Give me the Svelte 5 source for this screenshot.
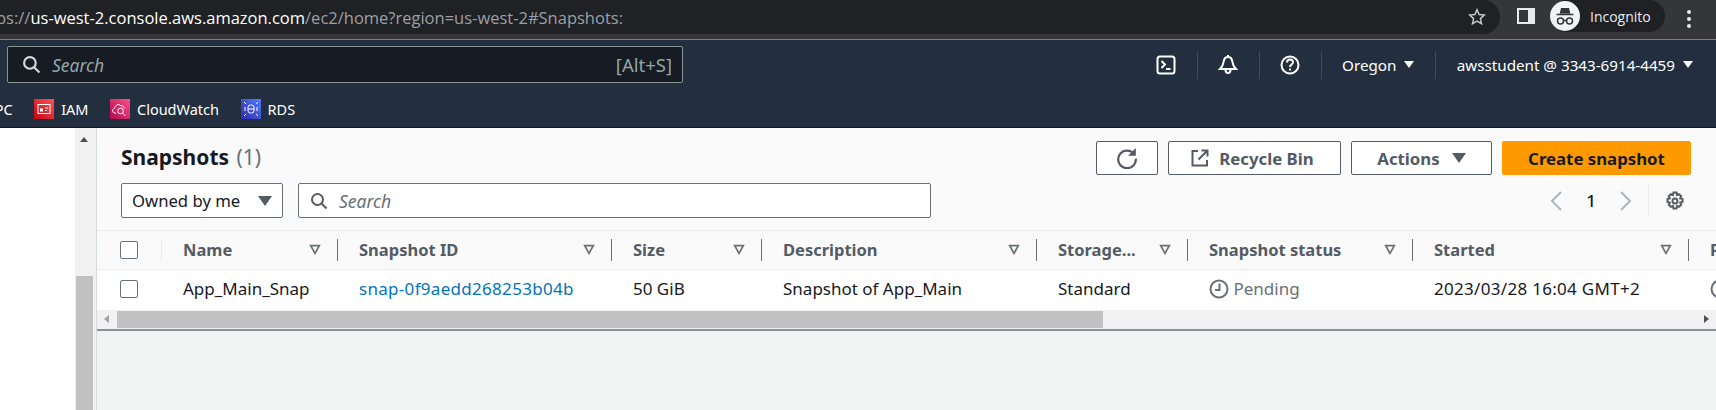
<script lang="ts">
  const columns = [
    { label: "Name", width: 176 },
    { label: "Snapshot ID", width: 274 },
    { label: "Size", width: 150 },
    { label: "Description", width: 275 },
    { label: "Storage...", width: 151 },
    { label: "Snapshot status", width: 225 },
    { label: "Started", width: 276 },
    { label: "P", width: 120 }
  ];
</script>

<div class="page">
  <header class="chrome">
    <div class="omnibox">
      <div class="url"><span class="clip">ps://</span><b>us-west-2.console.aws.amazon.com</b>/ec2/home?region=us-west-2#Snapshots:</div>
      <svg class="star" width="18" height="18" viewBox="0 0 18 18" fill="none" stroke="#c4c7c5" stroke-width="1.5"><path d="M9 1.8l2.1 4.8 5.2.5-3.9 3.5 1.1 5.1L9 13l-4.5 2.7 1.1-5.1-3.9-3.5 5.2-.5z" /></svg>
    </div>
    <svg class="side" width="18" height="16" viewBox="0 0 18 16"><path fill="#e8eaed" d="M0 0h18v16H0z" /><path fill="#35363a" d="M2 2h9v12H2z" /></svg>
    <div class="incognito">
      <span class="avatar">
        <svg width="30" height="30" viewBox="0 0 30 30"><circle cx="15" cy="15" r="15" fill="#f1f3f4" /><path fill="#35363a" d="M11 7h8l1.300 5.500H9.700z M6.500 12.800h17v1.500h-17z" /><g fill="none" stroke="#35363a" stroke-width="1.500"><circle cx="10.500" cy="20" r="3" /><circle cx="19.500" cy="20" r="3" /><path d="M13.500 19.500h3" /></g></svg>
      </span>
      <span>Incognito</span>
    </div>
    <div class="dots"><i></i><i></i><i></i></div>
  </header>

  <nav class="aws">
    <div class="nav-top">
      <div class="global-search">
        <svg width="19" height="19" viewBox="0 0 18 18" fill="none" stroke="#d5dbdb" stroke-width="2"><circle cx="7.500" cy="7.500" r="5.500" /><path d="M11.500 11.500l5 5" /></svg>
        <em>Search</em>
        <span class="shortcut">[Alt+S]</span>
      </div>
      <div class="nav-actions">
        <span class="nav-item icon">
          <svg width="20" height="20" viewBox="0 0 20 20" fill="none" stroke="#fff" stroke-width="2"><rect x="1.500" y="1.500" width="17" height="17" rx="2.500" /><path d="M5.500 6l3.500 3.500L5.500 13M10 14h4.500" /></svg>
        </span>
        <span class="nav-item icon">
          <svg width="20" height="22" viewBox="0 0 20 22" fill="none" stroke="#fff" stroke-width="2"><path d="M10 1v2M10 3c-2.500 0-4 2-4.300 4.500-.3 3-1.700 5.500-3.700 7.500h16c-2-2-3.400-4.500-3.700-7.500C14 5 12.500 3 10 3zM7.500 15.500c0 2 1 3.500 2.500 3.500s2.500-1.500 2.500-3.500" /></svg>
        </span>
        <span class="nav-item icon">
          <svg width="20" height="20" viewBox="0 0 20 20" fill="none" stroke="#fff" stroke-width="2"><circle cx="10" cy="10" r="8.500" /><path d="M7 7.500c0-1.800 1.300-3 3-3s3 1.200 3 2.800c0 2.200-3 2.400-3 4.700M10 13.500v2" /></svg>
        </span>
        <span class="nav-item region">Oregon <span class="caret"></span></span>
        <span class="nav-item user">awsstudent @ 3343-6914-4459 <span class="caret"></span></span>
      </div>
    </div>
    <div class="favorites">
      <span class="fav cut">VPC</span>
      <span class="fav">
        <svg class="fav-icon" width="20" height="20" viewBox="0 0 20 20">
          <defs><linearGradient id="iam-bg" x1="0" y1="1" x2="1" y2="0"><stop offset="0" stop-color="#bd0816" /><stop offset="1" stop-color="#ff5252" /></linearGradient></defs>
          <rect width="20" height="20" fill="url(#iam-bg)" />
          <rect x="4" y="5.500" width="12" height="9" fill="none" stroke="#fff" />
          <path fill="#fff" d="M6 9.500h3v3H6zM11 8.500h3v1h-3zM11 11h2v1h-2z" />
        </svg>
        IAM
      </span>
      <span class="fav">
        <svg class="fav-icon" width="20" height="20" viewBox="0 0 20 20">
          <defs><linearGradient id="cw-bg" x1="0" y1="1" x2="1" y2="0"><stop offset="0" stop-color="#b0084d" /><stop offset="1" stop-color="#ff4f8b" /></linearGradient></defs>
          <rect width="20" height="20" fill="url(#cw-bg)" />
          <g fill="none" stroke="#fff"><path d="M6 14H5c-3 0-3-4-.5-4.500C5 6 9 4 11 7c2-.5 3.500 1 3.200 2.500" /><circle cx="10.500" cy="12" r="2.800" /><path d="M12.500 14l3 3" /></g>
        </svg>
        CloudWatch
      </span>
      <span class="fav">
        <svg class="fav-icon" width="20" height="20" viewBox="0 0 20 20">
          <defs><linearGradient id="rds-bg" x1="0" y1="1" x2="1" y2="0"><stop offset="0" stop-color="#2e27ad" /><stop offset="1" stop-color="#527fff" /></linearGradient></defs>
          <rect width="20" height="20" fill="url(#rds-bg)" />
          <g fill="none" stroke="#fff"><rect x="7" y="6" width="6" height="8" rx="2.500" /><path d="M7 10h6M3 3l2 2M17 3l-2 2M3 17l2-2M17 17l-2-2M4 8v4M16 8v4" /></g>
        </svg>
        RDS
      </span>
    </div>
  </nav>

  <main class="body">
    <div class="side-nav"></div>
    <div class="v-scroll">
      <span class="up"></span>
      <div class="v-thumb"></div>
    </div>
    <section class="content">
      <div class="panel-head">
        <div class="head-row">
          <h1>Snapshots <span>(1)</span></h1>
          <div class="buttons">
            <button class="btn refresh" aria-label="Refresh">
              <svg width="22" height="22" viewBox="0 0 20 20" fill="none" stroke="#545b64" stroke-width="2"><path d="M16.500 6.500A8 8 0 1 0 18 10.500" /><path fill="#545b64" stroke="none" d="M18 1v7h-7z" /></svg>
            </button>
            <button class="btn recycle">
              <svg width="18" height="18" viewBox="0 0 18 18" fill="none" stroke="#545b64" stroke-width="2"><path d="M7 2H1.500v14.500H16V11M10.500 1.500h6v6M16 2L7.500 10.500" /></svg>
              Recycle Bin
            </button>
            <button class="btn actions">Actions <span class="caret dark"></span></button>
            <button class="btn primary">Create snapshot</button>
          </div>
        </div>
        <div class="filter-row">
          <div class="select">Owned by me <span class="caret dark"></span></div>
          <div class="search">
            <svg width="18" height="18" viewBox="0 0 18 18" fill="none" stroke="#545b64" stroke-width="2"><circle cx="7.500" cy="7.500" r="5.500" /><path d="M11.500 11.500l5 5" /></svg>
            <em>Search</em>
          </div>
          <div class="pager">
            <svg width="14" height="22" viewBox="0 0 14 22" fill="none" stroke="#aab7b8" stroke-width="2"><path d="M12 2L3 11l9 9" /></svg>
            <span class="page-no">1</span>
            <svg width="14" height="22" viewBox="0 0 14 22" fill="none" stroke="#aab7b8" stroke-width="2"><path d="M2 2l9 9-9 9" /></svg>
            <span class="pager-line"></span>
            <svg width="20" height="20" viewBox="0 0 20 20" fill="none" stroke="#545b64" stroke-width="2"><path d="M8.500 1.500h3l.5 2.500 2-.9 2.200 2.100-1 2.100 2.300.7v3l-2.300.7 1 2.100-2.200 2.100-2-.9-.5 2.500h-3l-.5-2.500-2 .9-2.200-2.100 1-2.100-2.300-.7v-3l2.300-.7-1-2.100 2.200-2.100 2 .9z" /><circle cx="10" cy="10" r="2.500" /></svg>
          </div>
        </div>
      </div>

      <div class="table-wrap">
        <table>
          <colgroup>
            <col style="width: 65px" />
            {#each columns as col}
              <col style="width: {col.width}px" />
            {/each}
          </colgroup>
          <thead>
            <tr>
              <th class="check-cell"><span class="check"></span><span class="soft-line"></span></th>
              {#each columns as col, i}
                <th>
                  <div class="th-inner">
                    <span>{col.label}</span>
                    {#if i < columns.length - 1}
                      <svg width="12" height="11" viewBox="0 0 14 12" fill="none" stroke="#687078" stroke-width="2"><path d="M2 1.500h10L7 10.500z" /></svg>
                      <span class="col-line"></span>
                    {/if}
                  </div>
                </th>
              {/each}
            </tr>
          </thead>
          <tbody>
            <tr>
              <td class="check-cell"><span class="check"></span></td>
              <td>App_Main_Snap</td>
              <td class="digits"><a href="#top">snap-0f9aedd268253b04b</a></td>
              <td>50 GiB</td>
              <td>Snapshot of App_Main</td>
              <td>Standard</td>
              <td class="pending">
                <svg width="20" height="20" viewBox="0 0 20 20" fill="none" stroke="#687078" stroke-width="2"><circle cx="10" cy="10" r="8.500" /><path d="M10.500 4.500V11H6" /></svg>
                Pending
              </td>
              <td class="digits">2023/03/28 16:04 GMT+2</td>
              <td class="pending">
                <svg width="20" height="20" viewBox="0 0 20 20" fill="none" stroke="#687078" stroke-width="2"><circle cx="10" cy="10" r="8.500" /></svg>
              </td>
            </tr>
          </tbody>
        </table>
      </div>

      <div class="h-scroll">
        <span class="left"></span>
        <div class="h-thumb"></div>
        <span class="right"></span>
      </div>
    </section>
  </main>
</div>

<style>
  :global(body) {
    margin: 0;
    background: #f2f3f3;
  }

  .page {
    width: 1716px;
    height: 410px;
    overflow: hidden;
    display: flex;
    flex-direction: column;
    font-family: "Noto Sans", "Open Sans", sans-serif;
    font-size: 17px;
    color: #16191f;
  }

  /* browser toolbar */
  .chrome {
    flex: 0 0 39px;
    background: #35363a;
    border-bottom: 1px solid #7b7f84;
    display: flex;
    align-items: flex-start;
    font-family: "Open Sans", sans-serif;
    color: #e8eaed;
  }

  .omnibox {
    width: 1500px;
    height: 34px;
    margin-right: 1px;
    background: #202124;
    border-radius: 0 17px 17px 0;
    display: flex;
    align-items: center;
    justify-content: space-between;
    padding-right: 14px;
    box-sizing: border-box;
    flex: none;
  }

  .url {
    font-size: 16.500px;
    color: #9aa0a6;
    white-space: nowrap;
    margin-left: -4px;
  }

  .url b {
    font-weight: 400;
    color: #fff;
  }

  .side {
    margin: 8px 0 0 16px;
    flex: none;
  }

  .incognito {
    margin-left: 15px;
    width: 115px;
    height: 32px;
    box-sizing: border-box;
    border-radius: 16px;
    background: #202124;
    display: flex;
    align-items: center;
    gap: 10px;
    font-size: 14px;
    flex: none;
  }

  .avatar {
    display: flex;
  }

  .dots {
    margin: 10px 0 0 22px;
    display: flex;
    flex-direction: column;
    gap: 3px;
  }

  .dots i {
    width: 4px;
    height: 4px;
    border-radius: 50%;
    background: #e8eaed;
  }

  /* aws console nav */
  .aws {
    flex: 0 0 88px;
    background: #232f3e;
    border-bottom: 1px solid #16191f;
    box-sizing: border-box;
    color: #fff;
  }

  .nav-top {
    display: flex;
    justify-content: space-between;
    padding: 6px 23px 0 7px;
  }

  .global-search {
    width: 676px;
    height: 37px;
    box-sizing: border-box;
    background: #161b24;
    border: 1px solid #879596;
    border-radius: 2px;
    display: flex;
    align-items: center;
    padding: 0 10px 0 14px;
    gap: 11px;
  }

  .global-search em {
    flex: 1;
    font-size: 17.500px;
    color: #95a5a6;
  }

  .shortcut {
    color: #95a5a6;
    font-size: 18.500px;
  }

  .nav-actions {
    display: flex;
    align-items: center;
    height: 37px;
    font-size: 15.200px;
  }

  .nav-item {
    display: flex;
    align-items: center;
    justify-content: center;
    height: 28px;
    border-right: 1px solid #3f4b5b;
    white-space: nowrap;
  }

  .nav-item.icon {
    width: 61px;
  }

  .nav-item.region {
    width: 113px;
    gap: 8px;
  }

  .nav-item.user {
    border-right: none;
    padding-left: 21px;
    gap: 8px;
  }

  .caret {
    display: inline-block;
    width: 0;
    height: 0;
    border-left: 5px solid transparent;
    border-right: 5px solid transparent;
    border-top: 7px solid #fff;
  }

  .caret.dark {
    border-left-width: 7px;
    border-right-width: 7px;
    border-top: 10px solid #545b64;
  }

  .favorites {
    display: flex;
    align-items: center;
    margin-top: 10px;
    height: 32px;
    font-size: 14.500px;
    overflow: hidden;
  }

  .fav {
    display: flex;
    align-items: center;
    gap: 7px;
    margin-right: 21.500px;
    white-space: nowrap;
  }

  .fav.cut {
    margin-left: -14px;
  }

  .fav-icon {
    flex: none;
  }

  /* page body */
  .body {
    flex: 1;
    display: flex;
    min-height: 0;
  }

  .side-nav {
    flex: 0 0 75px;
    background: #fff;
  }

  .v-scroll {
    flex: 0 0 22px;
    background: #f1f1f1;
    border-right: 1px solid #d5dbdb;
    box-sizing: border-box;
    display: flex;
    flex-direction: column;
    align-items: center;
    padding: 0 3px 0 0;
  }

  .up {
    margin-top: 9px;
    border-left: 4px solid transparent;
    border-right: 4px solid transparent;
    border-bottom: 5px solid #505050;
  }

  .v-thumb {
    margin-top: 134px;
    width: 17px;
    flex: 1;
    background: #c1c1c1;
  }

  .content {
    flex: 1;
    min-width: 0;
    display: flex;
    flex-direction: column;
  }

  .panel-head {
    height: 103px;
    box-sizing: border-box;
    background: #fafafa;
    border-bottom: 1px solid #eaeded;
    padding: 13px 25px 0 24px;
  }

  .head-row {
    display: flex;
    justify-content: space-between;
    height: 42px;
  }

  h1 {
    margin: 0;
    font-size: 21px;
    font-weight: 700;
    line-height: 32px;
  }

  h1 span {
    margin-left: 2px;
    font-weight: 400;
    color: #687078;
  }

  .buttons {
    display: flex;
    gap: 10px;
  }

  .btn {
    height: 34px;
    box-sizing: border-box;
    border: 1px solid #545b64;
    border-radius: 2px;
    background: #fff;
    color: #545b64;
    font: 700 16.800px "Noto Sans", sans-serif;
    display: flex;
    align-items: center;
    justify-content: center;
    gap: 10px;
    padding: 0;
  }

  .refresh { width: 62px; }
  .recycle { width: 173px; padding-right: 4px; }
  .actions { width: 141px; gap: 12px; }

  .primary {
    width: 189px;
    background: #ff9900;
    border-color: #ff9900;
    color: #16191f;
  }

  .filter-row {
    display: flex;
    align-items: center;
    height: 35px;
  }

  .select {
    width: 162px;
    height: 35px;
    box-sizing: border-box;
    background: #fff;
    border: 1px solid #687078;
    border-radius: 2px;
    display: flex;
    align-items: center;
    justify-content: space-between;
    padding: 0 10px;
    font-size: 16.700px;
  }

  .search {
    margin-left: 15px;
    width: 633px;
    height: 35px;
    box-sizing: border-box;
    background: #fff;
    border: 1px solid #687078;
    border-radius: 2px;
    display: flex;
    align-items: center;
    gap: 11px;
    padding: 0 11px;
  }

  .search em {
    color: #687078;
    font-size: 17.500px;
  }

  .pager {
    margin-left: auto;
    margin-right: 6px;
    display: flex;
    align-items: center;
  }

  .page-no {
    margin: 0 23px;
    font-weight: 500;
  }

  .pager-line {
    width: 1px;
    height: 32px;
    margin: 0 16px 0 15px;
    background: #eaeded;
  }

  .table-wrap {
    overflow: hidden;
    height: 79px;
    background: #fff;
  }

  table {
    border-collapse: collapse;
    table-layout: fixed;
    width: 1712px;
  }

  th {
    height: 38px;
    padding: 0 0 0 21px;
    background: #fafafa;
    border-bottom: 1px solid #eaeded;
    box-sizing: border-box;
    text-align: left;
    color: #545b64;
    font-size: 16.500px;
    font-weight: 700;
  }

  .th-inner {
    display: flex;
    align-items: center;
    height: 22px;
  }

  .th-inner svg {
    margin-left: auto;
    margin-right: 16px;
    flex: none;
  }

  .col-line {
    width: 1px;
    height: 22px;
    background: #687078;
    flex: none;
  }

  td {
    height: 40px;
    padding: 0 0 2px 21px;
    background: #fff;
    white-space: nowrap;
    box-sizing: border-box;
  }

  .digits {
    letter-spacing: 0.3px;
  }

  th.check-cell,
  td.check-cell {
    padding: 0 0 0 23px;
    position: relative;
  }

  .check {
    display: block;
    width: 18px;
    height: 18px;
    box-sizing: border-box;
    background: #fff;
    border: 1px solid #687078;
    border-radius: 2px;
  }

  .soft-line {
    position: absolute;
    right: 0;
    top: 8px;
    width: 1px;
    height: 22px;
    background: #eaeded;
  }

  a {
    color: #0073bb;
    text-decoration: none;
  }

  .pending {
    color: #687078;
  }

  .pending svg {
    vertical-align: -4px;
  }

  .h-scroll {
    height: 21px;
    background: #f1f1f1;
    border-bottom: 2px solid #879596;
    box-sizing: border-box;
    display: flex;
    align-items: center;
    position: relative;
  }

  .left {
    position: absolute;
    left: 7px;
    top: 5px;
    border-top: 4px solid transparent;
    border-bottom: 4px solid transparent;
    border-right: 5px solid #a3a3a3;
  }

  .right {
    position: absolute;
    right: 7px;
    top: 5px;
    border-top: 4px solid transparent;
    border-bottom: 4px solid transparent;
    border-left: 5px solid #505050;
  }

  .h-thumb {
    margin-left: 20px;
    width: 986px;
    height: 17px;
    background: #c1c1c1;
  }
</style>
